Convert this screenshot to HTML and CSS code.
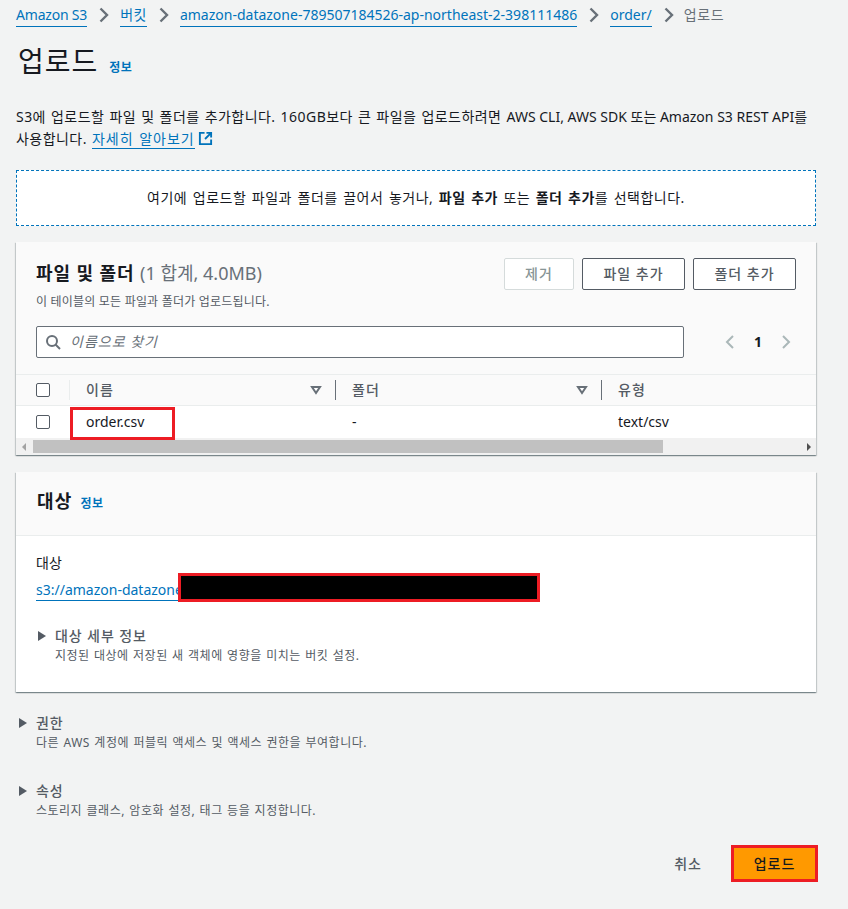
FILE: index.html
```html
<!DOCTYPE html>
<html lang="ko">
<head>
<meta charset="utf-8">
<title>업로드</title>
<link rel="stylesheet" href="styles.css">
</head>
<body>
<div class="page">
  <nav class="crumbs">
    <a class="link link-first" href="#">Amazon S3</a>
    <svg class="sep" viewBox="0 0 16 16"><path d="M4.500 1.500L11 8l-6.500 6.500"/></svg>
    <a class="link link-wide" href="#">버킷</a>
    <svg class="sep" viewBox="0 0 16 16"><path d="M4.500 1.500L11 8l-6.500 6.500"/></svg>
    <a class="link" href="#">amazon-datazone-789507184526-ap-northeast-2-398111486</a>
    <svg class="sep" viewBox="0 0 16 16"><path d="M4.500 1.500L11 8l-6.500 6.500"/></svg>
    <a class="link" href="#">order/</a>
    <svg class="sep sep-last" viewBox="0 0 16 16"><path d="M4.500 1.500L11 8l-6.500 6.500"/></svg>
    <span class="crumb-current">업로드</span>
  </nav>

  <header class="title-row">
    <h1 class="title">업로드</h1>
    <a class="info" href="#">정보</a>
  </header>

  <p class="desc">S3에 업로드할 파일 및 폴더를 추가합니다. 160GB보다 큰 파일을 업로드하려면 <span class="lat">AWS CLI, AWS SDK 또는 Amazon S3 REST API</span>를<br>사용합니다. <a class="link" href="#">자세히 알아보기</a><svg class="ext" viewBox="0 0 16 16"><path d="M7 2H2v12h12V9"/><path d="M9 2h5v5M14 2L7.500 8.500"/></svg></p>

  <div class="drop">여기에 업로드할 파일과 폴더를 끌어서 놓거나,&nbsp;<b>파일 추가</b>&nbsp;또는&nbsp;<b>폴더 추가</b>를 선택합니다.</div>

  <section class="card files">
    <div class="files-head">
      <div class="files-top">
        <div>
          <h2 class="card-title">파일 및 폴더 <span class="count">(1 합계, 4.0MB)</span></h2>
          <p class="card-sub">이 테이블의 모든 파일과 폴더가 업로드됩니다.</p>
        </div>
        <div class="actions">
          <button class="btn btn-off">제거</button>
          <button class="btn">파일 추가</button>
          <button class="btn">폴더 추가</button>
        </div>
      </div>
      <div class="tools">
        <div class="search">
          <svg class="search-icon" viewBox="0 0 16 16"><circle cx="7" cy="7" r="5"/><path d="M10.500 10.500L15 15"/></svg>
          <span class="placeholder">이름으로 찾기</span>
        </div>
        <div class="pager">
          <svg class="pg" viewBox="0 0 16 16"><path d="M11 2L5 8l6 6"/></svg>
          <b class="pg-num">1</b>
          <svg class="pg" viewBox="0 0 16 16"><path d="M5 2l6 6-6 6"/></svg>
        </div>
      </div>
    </div>
    <div class="thead">
      <div class="cell cell-check"><span class="box"></span></div>
      <div class="cell cell-h first">이름<svg class="sort" viewBox="0 0 12 10"><path d="M2 2h8L6 8z"/></svg></div>
      <div class="cell cell-h">폴더<svg class="sort" viewBox="0 0 12 10"><path d="M2 2h8L6 8z"/></svg></div>
      <div class="cell cell-h">유형</div>
    </div>
    <div class="tbody">
      <div class="cell cell-check"><span class="box"></span></div>
      <div class="cell cell-b">order.csv<span class="red-box"></span></div>
      <div class="cell cell-b">-</div>
      <div class="cell cell-b">text/csv</div>
    </div>
    <div class="scrollbar">
      <span class="arrow-l"></span>
      <span class="thumb"></span>
      <span class="arrow-r"></span>
    </div>
  </section>

  <section class="card dest">
    <div class="dest-head">
      <h2 class="card-title">대상</h2>
      <a class="info" href="#">정보</a>
    </div>
    <div class="dest-body">
      <div class="field-label">대상</div>
      <div class="field-value"><a class="link" href="#">s3://amazon-datazone</a><span class="redact"></span></div>
      <div class="exp exp-inner">
        <svg class="caret" viewBox="0 0 10 12"><path d="M1 1l8 5-8 5z"/></svg>
        <div>
          <div class="exp-title">대상 세부 정보</div>
          <div class="exp-sub">지정된 대상에 저장된 새 객체에 영향을 미치는 버킷 설정.</div>
        </div>
      </div>
    </div>
  </section>

  <div class="exp exp-outer">
    <svg class="caret" viewBox="0 0 10 12"><path d="M1 1l8 5-8 5z"/></svg>
    <div>
      <div class="exp-title">권한</div>
      <div class="exp-sub">다른 AWS 계정에 퍼블릭 액세스 및 액세스 권한을 부여합니다.</div>
    </div>
  </div>
  <div class="exp exp-outer exp-second">
    <svg class="caret" viewBox="0 0 10 12"><path d="M1 1l8 5-8 5z"/></svg>
    <div>
      <div class="exp-title">속성</div>
      <div class="exp-sub">스토리지 클래스, 암호화 설정, 태그 등을 지정합니다.</div>
    </div>
  </div>

  <footer class="foot">
    <span class="cancel">취소</span>
    <button class="primary">업로드</button>
  </footer>
</div>
</body>
</html>
```

FILE: styles.css
```css
* { box-sizing: border-box; }
html, body { margin: 0; padding: 0; }
body {
  background: #f2f3f3;
  color: #16191f;
  font-family: "Noto Sans", "Noto Sans CJK KR", sans-serif;
  font-size: 14px;
  line-height: 22px;
  height: 909px;
  overflow: hidden;
}
.page { width: 800px; margin-left: 16px; padding-top: 4px; }
.link {
  color: #0073bb;
  text-decoration: none;
  border-bottom: 1px solid #0073bb;
}
.link-first { letter-spacing: -.2px; }
.link-wide { letter-spacing: .5px; }
.crumbs { display: flex; align-items: center; height: 22px; white-space: nowrap; }
.sep { width: 16px; height: 16px; margin: 0 8px 0 9px; fill: none; stroke: #687078; stroke-width: 2.4; }
.sep-last { margin-right: 7px; }
.crumb-current { color: #687078; letter-spacing: .7px; }
.title-row { display: flex; align-items: flex-start; margin-top: 12px; height: 50px; }
.title { margin: 0; font-size: 28px; font-weight: 400; line-height: 46px; padding-left: 2px; letter-spacing: 1px; }
.info { color: #0073bb; text-decoration: none; font-size: 12px; font-weight: 600; letter-spacing: .5px; margin: 19px 0 0 11px; }
.desc { margin: 18px 0 0; height: 44px; letter-spacing: .45px; word-spacing: 1px; }
.desc .link { letter-spacing: 1px; }
.lat { letter-spacing: 0; word-spacing: 0; }
.ext { width: 15px; height: 15px; vertical-align: -2px; fill: none; stroke: #0073bb; stroke-width: 2; margin-left: 3px; }
.drop {
  display: flex; justify-content: center; align-items: center;
  margin-top: 20px; height: 56px;
  background: #fff;
  border: 1px dashed #0073bb;
  letter-spacing: .5px; word-spacing: 1.400px;
}
.drop b { font-weight: 700; }
.card {
  background: #fff;
  box-shadow: 0 1px 1px 0 rgba(0, 28, 36, .3), 1px 1px 1px 0 rgba(0, 28, 36, .15), -1px 1px 1px 0 rgba(0, 28, 36, .15);
}
.files { margin-top: 16px; height: 213px; }
.files-head { background: #fafafa; padding: 16px 20px 0; height: 132px; }
.files-top { display: flex; justify-content: space-between; align-items: flex-start; }
.card-title { margin: 0; font-size: 18px; line-height: 30px; font-weight: 700; letter-spacing: .9px; }
.count { color: #687078; font-weight: 400; letter-spacing: 0; }
.card-sub { margin: 4px 0 0; font-size: 12px; line-height: 20px; color: #545b64; letter-spacing: .2px; }
.actions { display: flex; gap: 8px; }
.btn {
  width: 103px; height: 32px; padding: 0;
  background: #fff;
  border: 1px solid #545b64; border-radius: 2px;
  color: #545b64;
  font: 500 14px/20px "Noto Sans", "Noto Sans CJK KR", sans-serif;
  letter-spacing: 1px;
}
.btn-off { width: 70px; border-color: #d5dbdb; color: #879596; }
.tools { display: flex; align-items: center; margin-top: 14px; }
.search {
  display: flex; align-items: center;
  width: 648px; height: 32px;
  background: #fff;
  border: 1px solid #687078; border-radius: 2px;
  padding-left: 8px;
}
.search-icon { width: 16px; height: 16px; fill: none; stroke: #687078; stroke-width: 2; }
.placeholder { margin-left: 9px; font-style: italic; color: #687078; letter-spacing: 1px; }
.pager { display: flex; align-items: center; margin-left: 38px; }
.pg { width: 16px; height: 16px; fill: none; stroke: #aab7b8; stroke-width: 2; }
.pg-num { margin: 0 16px; width: 8px; text-align: center; }
.thead, .tbody { display: grid; grid-template-columns: 53px 266px 266px 1fr; }
.thead { height: 32px; background: #fafafa; border-top: 1px solid #eaeded; border-bottom: 1px solid #eaeded; }
.tbody { height: 32px; }
.cell { display: flex; align-items: center; position: relative; }
.cell-check { padding-left: 20px; }
.box { width: 14px; height: 14px; background: #fff; border: 1px solid #545b64; border-radius: 2px; }
.cell-h { padding-left: 17px; color: #545b64; font-weight: 500; justify-content: space-between; padding-right: 13px; letter-spacing: 1px; }
.cell-h::before {
  content: ""; position: absolute; left: 0; top: 5px; bottom: 5px; width: 1px; background: #687078;
}
.cell-h.first::before { background: #eaeded; }
.sort { width: 12px; height: 10px; fill: #fff; stroke: #687078; stroke-width: 2; order: 2; }
.cell-b { padding-left: 17px; }
.red-box { position: absolute; left: 1px; top: 1px; width: 105px; height: 33px; border: 3px solid #ed1c24; }
.scrollbar { display: flex; align-items: center; height: 17px; background: #f1f1f1; }
.arrow-l { width: 0; height: 0; margin-left: 6px; border: 4px solid transparent; border-left-width: 0; border-right: 4px solid #a3a3a3; }
.thumb { width: 630px; height: 13px; background: #c1c1c1; margin-left: 7px; }
.arrow-r { width: 0; height: 0; margin-left: auto; margin-right: 5px; border: 4px solid transparent; border-right-width: 0; border-left: 4px solid #505050; }
.dest { margin-top: 17px; height: 220px; }
.dest-head { display: flex; align-items: baseline; height: 64px; padding: 14px 20px 0 21px; background: #fafafa; border-bottom: 1px solid #eaeded; }
.dest-head .card-title { letter-spacing: 1.200px; }
.dest-head .info { margin: 0 0 0 8px; }
.dest-body { padding: 16px 20px 0; }
.field-value { position: relative; margin-top: 5px; height: 24px; }
.field-value .link { line-height: 21px; display: inline-block; }
.redact { position: absolute; left: 142px; top: -6px; width: 362px; height: 29px; background: #000; border: 3px solid #ed1c24; }
.exp { display: flex; align-items: flex-start; }
.exp-inner { margin-top: 23px; }
.caret { width: 10px; height: 12px; flex: none; fill: #545b64; margin: 4px 8px 0 1px; }
.exp-title { color: #545b64; font-weight: 500; line-height: 20px; letter-spacing: .9px; }
.exp-sub { color: #545b64; font-size: 12px; line-height: 16px; margin-top: 2px; letter-spacing: .5px; word-spacing: .8px; }
.exp-outer { margin-top: 21px; margin-left: 1px; }
.exp-second { margin-top: 30px; }
.foot { display: flex; justify-content: flex-end; align-items: center; margin-top: 26px; }
.cancel { color: #545b64; font-weight: 500; margin-right: 29px; letter-spacing: 1px; }
.primary {
  width: 87px; height: 37px; padding: 0;
  background: #ff9900;
  border: 3px solid #ed1c24;
  color: #16191f;
  font: 500 14px/20px "Noto Sans", "Noto Sans CJK KR", sans-serif;
  letter-spacing: 1px;
  margin-right: -2px;
}
```
